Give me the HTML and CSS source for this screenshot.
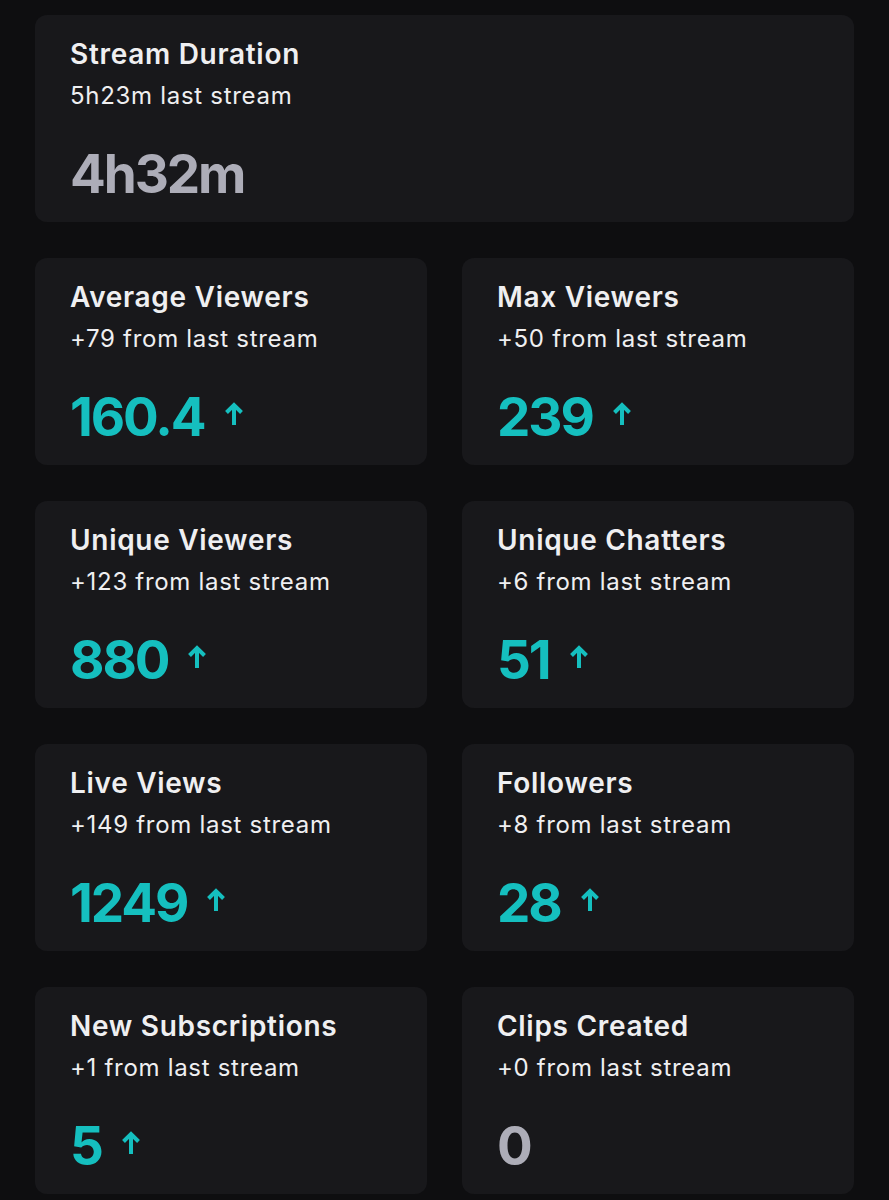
FILE: index.html
```html
<!DOCTYPE html>
<html>
<head>
<meta charset="utf-8">
<link rel="stylesheet" href="styles.css">
</head>
<body>
<main class="stats">
  <section class="card wide">
    <h2 class="title">Stream Duration</h2>
    <p class="sub">5h23m last stream</p>
    <div class="value neutral"><span>4h32m</span></div>
  </section>
  <section class="card">
    <h2 class="title">Average Viewers</h2>
    <p class="sub">+79 from last stream</p>
    <div class="value up"><span>160.4</span><svg class="arrow" viewBox="0 0 20 25"><path d="M10 24V4M2.5 11.5L10 4l7.5 7.5"/></svg></div>
  </section>
  <section class="card">
    <h2 class="title">Max Viewers</h2>
    <p class="sub">+50 from last stream</p>
    <div class="value up"><span>239</span><svg class="arrow" viewBox="0 0 20 25"><path d="M10 24V4M2.5 11.5L10 4l7.5 7.5"/></svg></div>
  </section>
  <section class="card">
    <h2 class="title">Unique Viewers</h2>
    <p class="sub">+123 from last stream</p>
    <div class="value up"><span>880</span><svg class="arrow" viewBox="0 0 20 25"><path d="M10 24V4M2.5 11.5L10 4l7.5 7.5"/></svg></div>
  </section>
  <section class="card">
    <h2 class="title">Unique Chatters</h2>
    <p class="sub">+6 from last stream</p>
    <div class="value up"><span>51</span><svg class="arrow" viewBox="0 0 20 25"><path d="M10 24V4M2.5 11.5L10 4l7.5 7.5"/></svg></div>
  </section>
  <section class="card">
    <h2 class="title">Live Views</h2>
    <p class="sub">+149 from last stream</p>
    <div class="value up"><span>1249</span><svg class="arrow" viewBox="0 0 20 25"><path d="M10 24V4M2.5 11.5L10 4l7.5 7.5"/></svg></div>
  </section>
  <section class="card">
    <h2 class="title">Followers</h2>
    <p class="sub">+8 from last stream</p>
    <div class="value up"><span>28</span><svg class="arrow" viewBox="0 0 20 25"><path d="M10 24V4M2.5 11.5L10 4l7.5 7.5"/></svg></div>
  </section>
  <section class="card">
    <h2 class="title">New Subscriptions</h2>
    <p class="sub">+1 from last stream</p>
    <div class="value up"><span>5</span><svg class="arrow" viewBox="0 0 20 25"><path d="M10 24V4M2.5 11.5L10 4l7.5 7.5"/></svg></div>
  </section>
  <section class="card">
    <h2 class="title">Clips Created</h2>
    <p class="sub">+0 from last stream</p>
    <div class="value neutral"><span>0</span></div>
  </section>
</main>
</body>
</html>
```
FILE: styles.css
```css
* { box-sizing: border-box; }
html, body {
  margin: 0;
  background: #0e0e10;
}
body {
  font-family: Inter, "Noto Sans", sans-serif;
  color: #efeff1;
  padding: 15px 35px 0;
}
.stats {
  display: grid;
  grid-template-columns: 1fr 1fr;
  column-gap: 35px;
  row-gap: 36px;
}
.card {
  background: #18181b;
  border-radius: 12px;
  padding: 22px 35px 18px;
}
.card.wide { grid-column: 1 / -1; }
.title {
  margin: 0;
  font-size: 28px;
  line-height: 34px;
  font-weight: 600;
  letter-spacing: 0.7px;
  color: #efeff1;
}
.sub {
  margin: 10px 0 0;
  font-size: 24px;
  line-height: 30px;
  font-weight: 400;
  letter-spacing: 0.7px;
  color: #efeff1;
}
.value {
  margin-top: 33px;
  display: flex;
  align-items: center;
  font-size: 53px;
  line-height: 60px;
  font-weight: 700;
  letter-spacing: -2.1px;
}
.value.up { color: #15bfbf; }
.value.neutral { color: #adadb8; }
.arrow {
  width: 20px;
  height: 25px;
  margin-left: 19px;
  margin-bottom: 8px;
  fill: none;
  stroke: #15bfbf;
  stroke-width: 4;
}
```
